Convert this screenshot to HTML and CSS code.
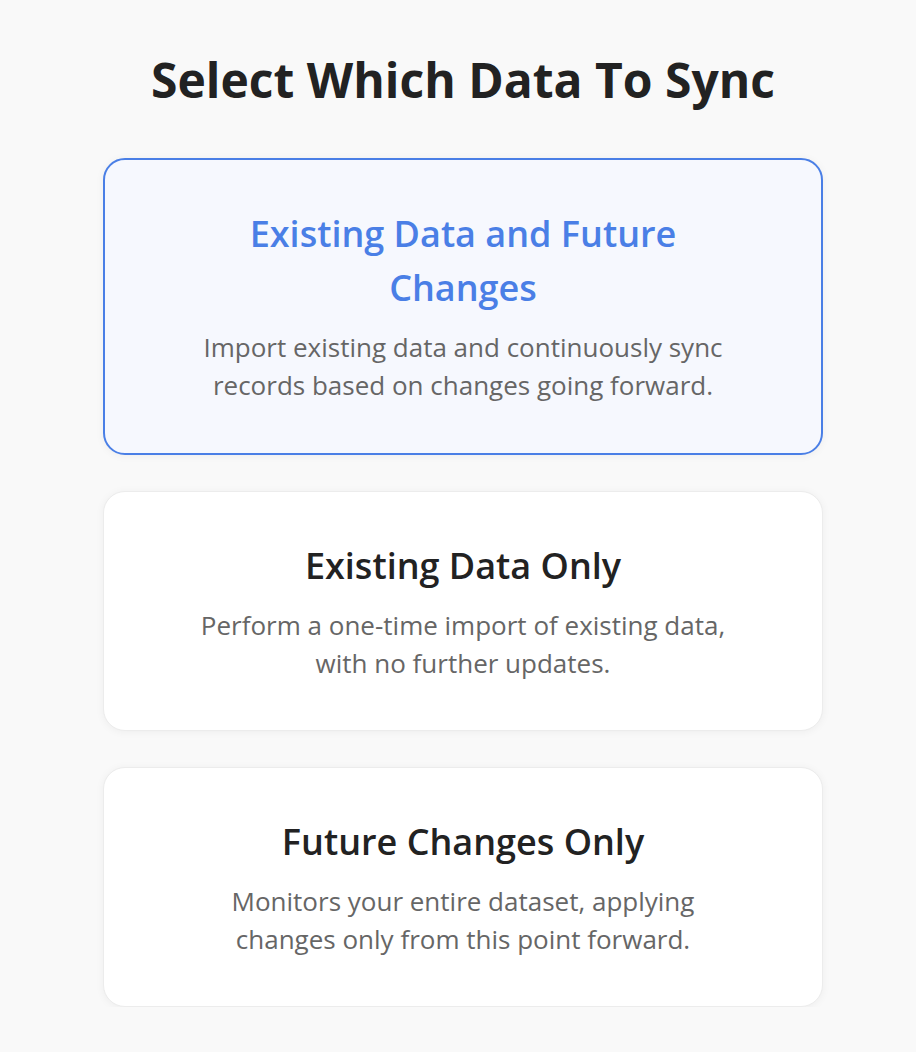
FILE: index.html
```html
<!DOCTYPE html>
<html lang="en">
  <head>
    <meta charset="UTF-8">
    <meta name="viewport" content="width=device-width, initial-scale=1.0">
    <title>Select Which Data To Sync</title>
    <link rel="stylesheet" href="styles.css">
  </head>
  <body>
    <div class="sync-container">
      <h1>Select Which Data To Sync</h1>
      <div class="option-list">
        <div class="option-card selected">
          <h2>Existing Data and Future Changes</h2>
          <p>Import existing data and continuously sync records based on changes going forward.</p>
        </div>
        <div class="option-card">
          <h2>Existing Data Only</h2>
          <p>Perform a one-time import of existing data, with no further updates.</p>
        </div>
        <div class="option-card">
          <h2>Future Changes Only</h2>
          <p>Monitors your entire dataset, applying changes only from this point forward.</p>
        </div>
      </div>
    </div>
  </body>
</html>
```

FILE: styles.css
```css
body {
  font-family: "Open Sans", Arial, sans-serif;
  background-color: #f9f9f9;
  margin: 0;
  padding: 0 0 0 10px;
}

.sync-container {
  width: 720px;
  margin: 0 auto;
  padding-top: 52px;
}

h1 {
  margin: 0 0 50px;
  font-size: 48px;
  line-height: 56px;
  font-weight: 700;
  color: #222;
  text-align: center;
}

.option-list {
  display: flex;
  flex-direction: column;
  gap: 36px;
}

.option-card {
  background-color: #fff;
  border: 1px solid #ececec;
  border-radius: 22px;
  box-shadow: 0px 1px 8px rgba(0, 0, 0, 0.05);
  padding: 47px 90px 48px;
  text-align: center;
  cursor: pointer;
}

.option-card.selected {
  background-color: #f6f8fe;
  border: 2px solid #4a7fe6;
  padding: 47px 89px 49px;
}

.option-card h2 {
  margin: 0 0 13px;
  font-size: 36px;
  line-height: 54px;
  font-weight: 600;
  color: #222;
}

.option-card.selected h2 {
  color: #4a7fe6;
}

.option-card p {
  margin: 0;
  font-size: 26px;
  line-height: 38px;
  color: #666;
}
```
